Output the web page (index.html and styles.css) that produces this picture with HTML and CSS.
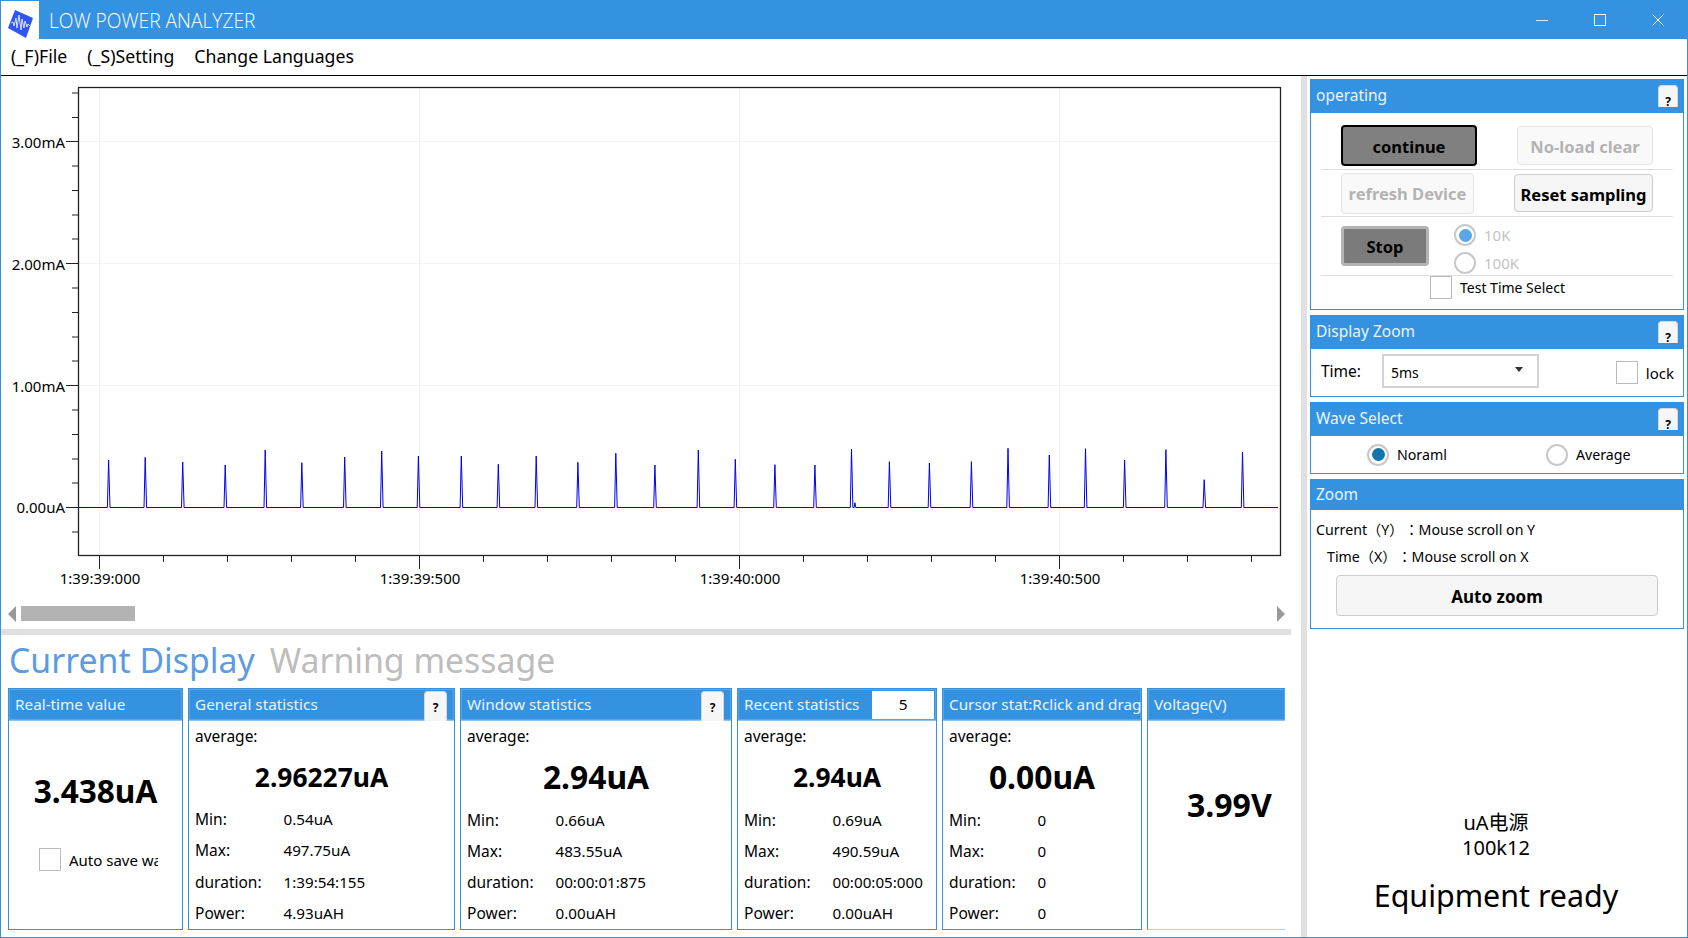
FILE: index.html
```html
<!DOCTYPE html>
<html lang="en">
<head>
    <meta charset="UTF-8">
    <title>LOW POWER ANALYZER</title>
    <link rel="stylesheet" href="styles.css">
</head>
<body>
<div class="window">
    <div class="titlebar">
        <div class="logo">
            <svg width="38" height="38" viewBox="0 0 38 38">
                <polygon points="14,9 32,17 25,37 7,27" fill="#2f55f5"/>
                <path d="M10 22 L12 21 L13 25 L15 17 L16 27 L18 14 L20 29 L21 18 L23 27 L24 20 L26 26 L27 23 L29 25" fill="none" stroke="#d8e4ff" stroke-width="1"/>
            </svg>
        </div>
        <div class="app-title">LOW POWER ANALYZER</div>
        <div class="win-btn">
            <svg width="14" height="14" viewBox="0 0 14 14"><path d="M1 7.5 H13" stroke="#dcecfa" fill="none"/></svg>
        </div>
        <div class="win-btn">
            <svg width="14" height="14" viewBox="0 0 14 14"><rect x="1.5" y="1.5" width="11" height="11" stroke="#eef6fd" fill="none"/></svg>
        </div>
        <div class="win-btn">
            <svg width="14" height="14" viewBox="0 0 14 14"><path d="M1.5 1.5 L12.5 12.5 M12.5 1.5 L1.5 12.5" stroke="#eef6fd" fill="none"/></svg>
        </div>
    </div>

    <div class="menubar">
        <span>(_F)File</span>
        <span>(_S)Setting</span>
        <span>Change Languages</span>
    </div>

    <div class="main">
        <div class="left-col">
            <svg class="chart" width="1290" height="520" viewBox="1 76 1290 520">
                <!-- grid -->
                <path class="grid" d="M99.5 88 V554 M419.5 88 V554 M739.5 88 V554 M1059.5 88 V554 M79 141.5 H1280 M79 263.5 H1280 M79 385.5 H1280"/>
                <!-- axis ticks -->
                <path class="tick" d="M72 93 H79 M72 117.5 H79 M66 141.5 H79 M72 166 H79 M72 190.5 H79 M72 215 H79 M72 239 H79 M66 263.5 H79 M72 288 H79 M72 312.5 H79 M72 337 H79 M72 361 H79 M66 385.5 H79 M72 410 H79 M72 434.5 H79 M72 459 H79 M72 483 H79 M66 507.5 H79 M72 532 H79"/>
                <path class="tick" d="M99.5 555 V569 M163.5 555 V562 M227.5 555 V562 M291.5 555 V562 M355.5 555 V562 M419.5 555 V569 M483.5 555 V562 M547.5 555 V562 M611.5 555 V562 M675.5 555 V562 M739.5 555 V569 M803.5 555 V562 M867.5 555 V562 M931.5 555 V562 M995.5 555 V562 M1059.5 555 V569 M1123.5 555 V562 M1187.5 555 V562 M1251.5 555 V562"/>
                <rect class="plot-frame" x="78.5" y="87.5" width="1202" height="468"/>
                <!-- wave -->
                <path class="wave" d="M79 507.5 H107.4 L108.6 460 L110 507.5 H144 L145.2 457.3 L146.6 507.5 H181.5 L182.7 462 L184.1 507.5 H224 L225.2 465 L226.6 507.5 H264 L265.2 450 L266.6 507.5 H300.6 L301.8 462.7 L303.2 507.5 H343.5 L344.7 457 L346.1 507.5 H380.5 L381.7 451 L383.1 507.5 H417.2 L418.4 456 L419.8 507.5 H460.1 L461.3 456 L462.7 507.5 H497.1 L498.3 464.3 L499.7 507.5 H535 L536.2 456 L537.6 507.5 H576.7 L577.9 462.3 L579.3 507.5 H614.6 L615.8 453.3 L617.2 507.5 H653.7 L654.9 465 L656.3 507.5 H697.1 L698.3 450 L699.7 507.5 H734.1 L735.3 459.3 L736.7 507.5 H773.7 L774.9 464.7 L776.3 507.5 H813.7 L814.9 465 L816.3 507.5 H850.3 L851.5 449.3 L852.9 507.5 L854.2 507.5 L854.9 502.7 L855.8 507.5 H888.2 L889.4 461.7 L890.8 507.5 H928.2 L929.4 463 L930.8 507.5 H970.2 L971.4 461.7 L972.8 507.5 H1006.8 L1008 448.3 L1009.4 507.5 H1048.1 L1049.3 455 L1050.7 507.5 H1084.3 L1085.5 448.7 L1086.9 507.5 H1123.4 L1124.6 460 L1126 507.5 H1164.7 L1165.9 449.7 L1167.3 507.5 H1203 L1204.2 479.7 L1205.6 507.5 H1241.3 L1242.5 452 L1243.9 507.5 H1278"/>
                <!-- labels -->
                <text class="y-label" x="65" y="148">3.00mA</text>
                <text class="y-label" x="65" y="270">2.00mA</text>
                <text class="y-label" x="65" y="392">1.00mA</text>
                <text class="y-label" x="65" y="513">0.00uA</text>
                <text class="x-label" x="100" y="584">1:39:39:000</text>
                <text class="x-label" x="420" y="584">1:39:39:500</text>
                <text class="x-label" x="740" y="584">1:39:40:000</text>
                <text class="x-label" x="1060" y="584">1:39:40:500</text>
            </svg>

            <div class="scrollbar">
                <div class="arrow-left"></div>
                <div class="thumb"></div>
                <div class="arrow-right"></div>
            </div>
            <div class="hsplit"></div>

            <div class="tabs">
                <span class="tab active">Current Display</span>
                <span class="tab">Warning message</span>
            </div>

            <div class="stats">
                <div class="card card-realtime">
                    <div class="card-head"><span class="card-title">Real-time value</span></div>
                    <div class="realtime-value">3.438uA</div>
                    <div class="autosave">
                        <div class="checkbox"></div>
                        <span class="autosave-text">Auto save wave</span>
                    </div>
                </div>

                <div class="card card-general">
                    <div class="card-head">
                        <span class="card-title">General statistics</span>
                        <div class="help-btn">?</div>
                    </div>
                    <div class="card-label">average:</div>
                    <div class="big-value v-small">2.96227uA</div>
                    <div class="stat-row"><span>Min:</span><span>0.54uA</span></div>
                    <div class="stat-row"><span>Max:</span><span>497.75uA</span></div>
                    <div class="stat-row"><span>duration:</span><span>1:39:54:155</span></div>
                    <div class="stat-row"><span>Power:</span><span>4.93uAH</span></div>
                </div>

                <div class="card card-window">
                    <div class="card-head">
                        <span class="card-title">Window statistics</span>
                        <div class="help-btn">?</div>
                    </div>
                    <div class="card-label">average:</div>
                    <div class="big-value">2.94uA</div>
                    <div class="stat-row"><span>Min:</span><span>0.66uA</span></div>
                    <div class="stat-row"><span>Max:</span><span>483.55uA</span></div>
                    <div class="stat-row"><span>duration:</span><span>00:00:01:875</span></div>
                    <div class="stat-row"><span>Power:</span><span>0.00uAH</span></div>
                </div>

                <div class="card card-recent">
                    <div class="card-head">
                        <span class="card-title">Recent statistics</span>
                        <div class="recent-input">5</div>
                    </div>
                    <div class="card-label">average:</div>
                    <div class="big-value v-small">2.94uA</div>
                    <div class="stat-row"><span>Min:</span><span>0.69uA</span></div>
                    <div class="stat-row"><span>Max:</span><span>490.59uA</span></div>
                    <div class="stat-row"><span>duration:</span><span>00:00:05:000</span></div>
                    <div class="stat-row"><span>Power:</span><span>0.00uAH</span></div>
                </div>

                <div class="card card-cursor">
                    <div class="card-head"><span class="card-title">Cursor stat:Rclick and drag</span></div>
                    <div class="card-label">average:</div>
                    <div class="big-value">0.00uA</div>
                    <div class="stat-row"><span>Min:</span><span>0</span></div>
                    <div class="stat-row"><span>Max:</span><span>0</span></div>
                    <div class="stat-row"><span>duration:</span><span>0</span></div>
                    <div class="stat-row"><span>Power:</span><span>0</span></div>
                </div>

                <div class="card card-voltage">
                    <div class="card-head"><span class="card-title">Voltage(V)</span></div>
                    <div class="voltage-value">3.99V</div>
                </div>
            </div>
        </div>

        <div class="vsplit"></div>

        <div class="right-col">
            <div class="panel panel-operating">
                <div class="panel-head">
                    <span>operating</span>
                    <div class="help-tab">?</div>
                </div>
                <div class="op-row op-row-1">
                    <div class="btn btn-pressed">continue</div>
                    <div class="btn btn-disabled btn-noload">No-load clear</div>
                </div>
                <div class="op-row op-row-2">
                    <div class="btn btn-disabled btn-refresh">refresh Device</div>
                    <div class="btn btn-normal btn-reset">Reset sampling</div>
                </div>
                <div class="op-row op-row-3">
                    <div class="btn btn-stop">Stop</div>
                    <div class="radio-stack">
                        <div class="radio-line disabled"><div class="radio checked-light"></div><span>10K</span></div>
                        <div class="radio-line disabled"><div class="radio"></div><span>100K</span></div>
                    </div>
                </div>
                <div class="op-row-4">
                    <div class="checkbox"></div>
                    <span>Test Time Select</span>
                </div>
            </div>

            <div class="panel panel-display">
                <div class="panel-head">
                    <span>Display Zoom</span>
                    <div class="help-tab">?</div>
                </div>
                <div class="display-body">
                    <span class="time-label">Time:</span>
                    <div class="combo">
                        <span>5ms</span>
                        <div class="caret"></div>
                    </div>
                    <div class="lock">
                        <div class="checkbox"></div>
                        <span>lock</span>
                    </div>
                </div>
            </div>

            <div class="panel panel-wave">
                <div class="panel-head">
                    <span>Wave Select</span>
                    <div class="help-tab">?</div>
                </div>
                <div class="wave-body">
                    <div class="radio-line radio-normal"><div class="radio checked"></div><span>Noraml</span></div>
                    <div class="radio-line radio-average"><div class="radio"></div><span>Average</span></div>
                </div>
            </div>

            <div class="panel panel-zoom">
                <div class="panel-head panel-head-short"><span>Zoom</span></div>
                <div class="zoom-line zoom-line-y">Current（Y）<span class="wide-colon">：</span>Mouse scroll on Y</div>
                <div class="zoom-line zoom-line-x">Time（X）<span class="wide-colon">：</span>Mouse scroll on X</div>
                <div class="btn btn-normal btn-autozoom">Auto zoom</div>
            </div>

            <div class="device-info">
                <div class="device-name">uA电源</div>
                <div class="device-name">100k12</div>
                <div class="device-status">Equipment ready</div>
            </div>
        </div>
    </div>
</div>
</body>
</html>
```

FILE: styles.css
```css
* {
    box-sizing: border-box;
}

html, body {
    margin: 0;
    padding: 0;
    background-color: #fff;
}

body {
    font-family: "Noto Sans", "Noto Sans CJK SC", sans-serif;
    color: #000;
}

.window {
    width: 1688px;
    height: 938px;
    display: flex;
    flex-direction: column;
    border: 1px solid #3592e0;
    border-top: 0;
    overflow: hidden;
}

.titlebar {
    height: 39px;
    background-color: #3592e0;
    display: flex;
    align-items: center;
    flex-shrink: 0;
}

.logo {
    width: 38px;
    height: 38px;
    margin-top: 1px;
    background-color: #fff;
}

.logo svg {
    display: block;
}

.app-title {
    flex: 1;
    margin: 2px 0 0 10px;
    font-family: "Open Sans", sans-serif;
    font-weight: 300;
    font-size: 19.2px;
    color: #fff;
}

.win-btn {
    width: 58px;
    display: flex;
    justify-content: center;
}

.menubar {
    height: 37px;
    flex-shrink: 0;
    border-bottom: 1px solid #000;
    display: flex;
    align-items: center;
    gap: 20px;
    padding: 0 0 2px 10px;
    font-size: 17.7px;
}

.main {
    flex: 1;
    display: flex;
    min-height: 0;
}

.left-col {
    width: 1300px;
    padding-right: 10px;
    display: flex;
    flex-direction: column;
}

.chart {
    display: block;
    flex-shrink: 0;
}

.grid {
    stroke: #f3f3f3;
    stroke-width: 1;
    fill: none;
}

.tick {
    stroke: #222;
    stroke-width: 1;
    fill: none;
}

.plot-frame {
    fill: none;
    stroke: #222;
    stroke-width: 1.3;
}

.wave {
    fill: none;
    stroke: #0000f0;
    stroke-width: 1;
}

.y-label, .x-label {
    font-size: 15px;
    fill: #000;
}

.y-label {
    text-anchor: end;
}

.x-label {
    text-anchor: middle;
}

.scrollbar {
    height: 33px;
    display: flex;
    align-items: center;
    padding: 2px 0 0 7px;
    flex-shrink: 0;
}

.arrow-left {
    width: 0;
    height: 0;
    border-top: 8px solid transparent;
    border-bottom: 8px solid transparent;
    border-right: 8px solid #999;
}

.thumb {
    width: 114px;
    height: 15px;
    margin-left: 5px;
    background-color: #b3b3b3;
}

.arrow-right {
    width: 0;
    height: 0;
    margin-left: auto;
    margin-right: 6px;
    border-top: 8px solid transparent;
    border-bottom: 8px solid transparent;
    border-left: 8px solid #999;
}

.hsplit {
    height: 6px;
    background-color: #e0e0e0;
    flex-shrink: 0;
}

.tabs {
    height: 53px;
    flex-shrink: 0;
    display: flex;
    gap: 15px;
    padding-left: 8px;
    font-size: 33.8px;
    line-height: 50px;
}

.tab {
    color: #bdbdbd;
}

.tab.active {
    color: #5a9be2;
}

.stats {
    display: flex;
    gap: 5px;
    padding-left: 7px;
    height: 242px;
}

.card {
    border: 1px solid #3592e0;
    display: flex;
    flex-direction: column;
    min-width: 0;
    overflow: hidden;
}

.card-realtime { width: 175px; }
.card-general { width: 267px; }
.card-window { width: 272px; }
.card-recent { width: 200px; }
.card-cursor { width: 200px; }

.card-voltage {
    width: 138px;
    border-right: 0;
    border-bottom-color: #a8d2f2;
}

.card-head {
    height: 32px;
    flex-shrink: 0;
    background-color: #3592e0;
    border-bottom: 1px solid #8fc3ee;
    box-shadow: inset 0 0 0 1px #5aa5e6;
    display: flex;
    align-items: center;
    justify-content: space-between;
    padding-left: 6px;
    color: #eaf5ff;
    font-size: 15.3px;
    white-space: nowrap;
}

.card-title {
    margin-top: -2px;
}

.help-btn {
    width: 23px;
    height: 30px;
    margin: 2px 7px 0 0;
    flex-shrink: 0;
    background-color: #f6f6f6;
    border: 1px solid #d8d8d8;
    border-bottom: 0;
    border-radius: 4px 4px 0 0;
    color: #000;
    font-size: 12px;
    font-weight: bold;
    text-align: center;
    line-height: 32px;
}

.recent-input {
    width: 62px;
    height: 28px;
    margin: 0 2px 0 0;
    flex-shrink: 0;
    background-color: #fff;
    color: #000;
    text-align: center;
    line-height: 26px;
}

.card-label {
    height: 24px;
    margin-top: 3px;
    padding-left: 6px;
    font-size: 15.5px;
    line-height: 24px;
}

.big-value {
    height: 50px;
    margin: 4px 0 2px;
    text-align: center;
    font-size: 31.8px;
    font-weight: bold;
    line-height: 50px;
}

.big-value.v-small {
    font-size: 26.4px;
}

.card-general .big-value {
    margin-bottom: 1px;
}

.stat-row {
    height: 31.5px;
    padding-left: 6px;
    display: grid;
    grid-template-columns: 88.5px 1fr;
    align-items: center;
    font-size: 15.5px;
    white-space: nowrap;
}

.stat-row span:last-child {
    font-size: 15.2px;
}

.realtime-value {
    margin-top: 50px;
    text-align: center;
    font-size: 31.6px;
    font-weight: bold;
    line-height: 40px;
}

.autosave {
    margin-top: 37px;
    display: flex;
    align-items: center;
    padding-left: 30px;
    gap: 8px;
    font-size: 15px;
}

.autosave-text {
    width: 89px;
    overflow: hidden;
    white-space: nowrap;
}

.voltage-value {
    margin-top: 64px;
    padding-left: 39px;
    font-size: 32px;
    font-weight: bold;
    line-height: 40px;
    white-space: nowrap;
}

.checkbox {
    width: 22px;
    height: 23px;
    flex-shrink: 0;
    background-color: #fff;
    border: 1px solid #bbb;
}

.vsplit {
    width: 6px;
    flex-shrink: 0;
    background-color: #e0e0e0;
}

.right-col {
    flex: 1;
    padding: 3px 3px 0 3px;
    display: flex;
    flex-direction: column;
    gap: 5px;
}

.panel {
    border: 1px solid #3592e0;
    flex-shrink: 0;
}

.panel-operating { height: 231px; }
.panel-display { height: 82px; }
.panel-wave { height: 72px; }
.panel-zoom { height: 150px; }

.panel-head {
    height: 33px;
    background-color: #3592e0;
    display: flex;
    align-items: center;
    justify-content: space-between;
    padding-left: 5px;
    color: #eaf5ff;
    font-size: 15.5px;
}

.panel-head span {
    margin-top: -4px;
}

.panel-head-short {
    height: 30px;
}

.panel-head-short span {
    margin-top: -2px;
}

.help-tab {
    width: 20px;
    height: 22px;
    align-self: flex-start;
    margin: 5px 5px 0 0;
    background-color: #f6f6f6;
    border: 1px solid #d8d8d8;
    border-bottom: 0;
    border-radius: 4px 4px 0 0;
    color: #000;
    font-size: 12px;
    font-weight: bold;
    text-align: center;
    line-height: 31px;
    overflow: hidden;
}

.op-row {
    margin: 0 10px;
    padding: 0 20px;
    display: flex;
    align-items: center;
    border-bottom: 1px solid #ddd;
}

.op-row-1 {
    height: 57px;
    padding-top: 9px;
    justify-content: space-between;
}

.op-row-2 {
    height: 47px;
    justify-content: space-between;
}

.op-row-3 {
    height: 59px;
    gap: 25px;
}

.op-row-4 {
    display: flex;
    justify-content: center;
    gap: 8px;
    font-size: 14px;
    line-height: 24px;
    margin-left: 1px;
}

.btn {
    display: flex;
    align-items: center;
    justify-content: center;
    padding-top: 2px;
    border-radius: 4px;
    font-size: 16.5px;
    font-weight: bold;
    white-space: nowrap;
}

.btn-pressed {
    width: 136px;
    height: 41px;
    background-color: #808080;
    border: 2px solid #000;
}

.btn-disabled {
    background-color: #f9f9f9;
    border: 1px solid #e5e5e5;
    color: #b3b3b3;
}

.btn-noload {
    width: 136px;
    height: 39px;
}

.btn-refresh {
    width: 133px;
    height: 41px;
    padding-top: 0;
}

.btn-normal {
    background-color: #f5f5f5;
    border: 1px solid #ccc;
}

.btn-reset {
    width: 139px;
    height: 38px;
}

.btn-stop {
    width: 88px;
    height: 40px;
    padding-top: 0;
    background-color: #7b7b7b;
    border: 3px solid #b3b3b3;
}

.btn-autozoom {
    width: 322px;
    height: 41px;
    margin: 5px 0 0 25px;
    font-size: 17px;
}

.radio-stack {
    display: flex;
    flex-direction: column;
    gap: 6px;
    margin-top: 6px;
}

.radio-line {
    display: flex;
    align-items: center;
    gap: 8px;
    font-size: 14.2px;
}

.radio-line.disabled {
    color: #c4c4c4;
    font-size: 15px;
}

.radio {
    width: 22px;
    height: 22px;
    flex-shrink: 0;
    border: 2px solid #c8c8c8;
    border-radius: 50%;
    background-color: #fff;
    display: flex;
    align-items: center;
    justify-content: center;
}

.radio.checked::after,
.radio.checked-light::after {
    content: "";
    width: 13px;
    height: 13px;
    border-radius: 50%;
}

.radio.checked::after {
    background-color: #1276ad;
}

.radio.checked-light::after {
    background-color: #5aa7e8;
}

.display-body {
    height: 47px;
    display: flex;
    align-items: center;
    padding-left: 10px;
    font-size: 15.5px;
}

.time-label {
    width: 61px;
    margin-top: -3px;
}

.combo {
    width: 157px;
    height: 34px;
    margin-top: -3px;
    padding: 2px 8px 0 7px;
    border: 2px solid #d4d4d4;
    display: flex;
    align-items: center;
    justify-content: space-between;
    font-size: 14px;
}

.caret {
    width: 0;
    height: 0;
    margin: -6px 6px 0 0;
    border-left: 4px solid transparent;
    border-right: 4px solid transparent;
    border-top: 5px solid #333;
}

.lock {
    margin-left: auto;
    padding-right: 9px;
    display: flex;
    align-items: center;
    gap: 8px;
    font-size: 15px;
}

.wave-body {
    height: 37px;
    display: flex;
    align-items: center;
    padding-left: 56px;
}

.radio-normal {
    width: 179px;
}

.zoom-line {
    font-size: 14.2px;
    line-height: 27px;
    white-space: nowrap;
}

.zoom-line-y {
    margin: 6px 0 0 5px;
}

.zoom-line-x {
    margin-left: 16px;
}

.wide-colon {
    font-family: "Noto Sans CJK TC", sans-serif;
    margin-left: 8px;
}

.device-info {
    margin-top: auto;
    padding-bottom: 19px;
    text-align: center;
    margin-left: -2px;
}

.device-name {
    font-size: 20px;
    line-height: 25px;
}

.device-status {
    margin-top: 14px;
    font-size: 30.4px;
    line-height: 44px;
}
```
